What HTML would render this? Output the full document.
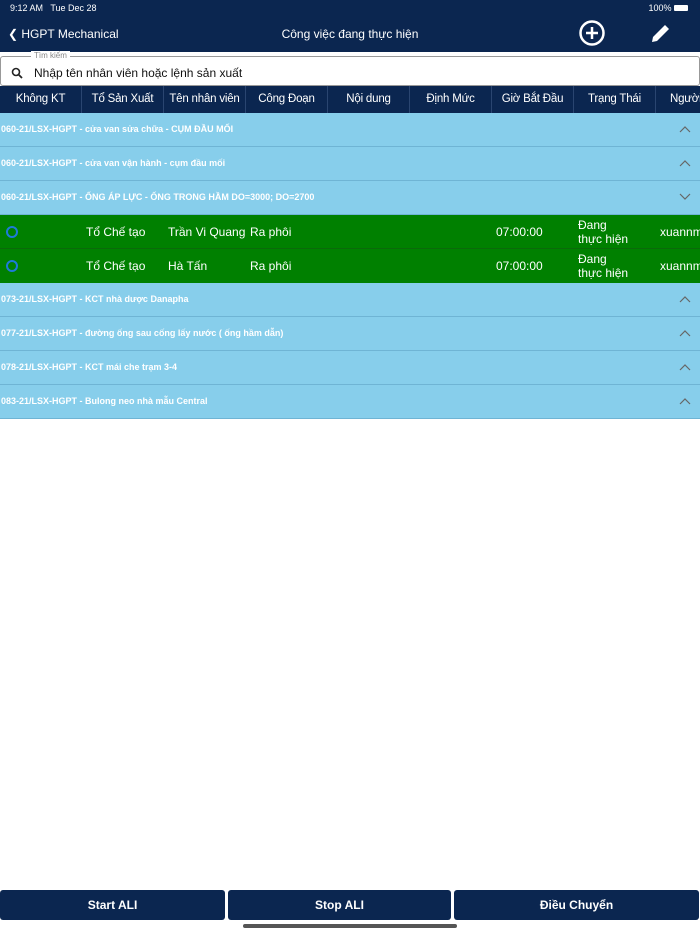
<!DOCTYPE html>
<html><head><meta charset="utf-8"><style>
*{margin:0;padding:0;box-sizing:border-box}
body{width:700px;height:934px;background:#fff;font-family:"Liberation Sans",sans-serif;position:relative;overflow:hidden}
.nav{position:absolute;left:0;top:0;width:700px;height:52px;background:#0b2650;color:#fff}
.sb{position:absolute;top:3px;font-size:9px;color:#fff}
.search{position:absolute;left:0;top:56px;width:700px;height:30px;border:1px solid #999;border-radius:3px;background:#fff}
.search .lbl{position:absolute;left:30px;top:-6px;font-size:8px;color:#888;background:#fff;padding:0 3px}
.search .t{position:absolute;left:33px;top:9px;font-size:12px;color:#111}
.hdr{position:absolute;left:0;top:86px;width:700px;height:27px;background:#0b2650;color:#fff;font-size:11.5px;font-weight:normal;letter-spacing:-0.2px}
.hdr div{position:absolute;top:0;width:82px;height:27px;line-height:27px;text-align:center;border-right:1px solid #2a4570;white-space:nowrap}
.g{position:absolute;left:0;width:700px;height:34px;background:#87ceeb;border-bottom:1px solid #6fb4d4;color:#fff;font-size:9px;font-weight:bold;line-height:33px;padding-left:1px}
.g svg{position:absolute;right:9px;top:12px}
.r{position:absolute;left:0;width:700px;height:34px;background:#008000;color:#fff;font-size:12px}
.r div{position:absolute;top:0;height:34px;line-height:34px}
.r .st{line-height:14px;top:3px}
.c{left:6px;top:11px!important;width:12px;height:12px!important;border:2px solid #1e7bd8;border-radius:50%}
.btn{position:absolute;top:890px;height:30px;background:#0b2650;color:#fff;font-size:12px;font-weight:bold;text-align:center;line-height:30px;border-radius:3px}
</style></head><body>
<div class="nav">
<div class="sb" style="left:10px">9:12 AM &nbsp; Tue Dec 28</div>
<div class="sb" style="right:12px">100% <span style="display:inline-block;width:14px;height:6px;background:#fff;border-radius:1px"></span></div>
<div style="position:absolute;left:8px;top:27px;font-size:12px">&#10094; HGPT Mechanical</div>
<div style="position:absolute;left:0;width:700px;text-align:center;top:27px;font-size:12px">Công việc đang thực hiện</div>
<svg style="position:absolute;left:578px;top:19px" width="28" height="28" viewBox="0 0 28 28"><circle cx="14" cy="14" r="11.5" fill="none" stroke="#fff" stroke-width="2.5"/><path d="M14 8v12M8 14h12" stroke="#fff" stroke-width="2.5"/></svg>
<svg style="position:absolute;left:650px;top:22px" width="22" height="22" viewBox="0 0 22 22"><path d="M2 20l1-5L15 3l4 4L7 19z" fill="#fff"/><path d="M16 2l4 4" stroke="#0b2650" stroke-width="1"/></svg>
</div>
<div class="search"><div class="lbl">Tìm kiếm</div>
<svg style="position:absolute;left:10px;top:10px" width="12" height="12" viewBox="0 0 12 12"><circle cx="5" cy="5" r="3.5" fill="none" stroke="#222" stroke-width="1.6"/><path d="M7.5 7.5L11 11" stroke="#222" stroke-width="1.8"/></svg>
<div class="t">Nhập tên nhân viên hoặc lệnh sản xuất</div></div>
<div class="hdr">
<div style="left:0">Không KT</div><div style="left:82px">Tổ Sản Xuất</div><div style="left:164px">Tên nhân viên</div><div style="left:246px">Công Đoạn</div><div style="left:328px">Nội dung</div><div style="left:410px">Định Mức</div><div style="left:492px">Giờ Bắt Đầu</div><div style="left:574px">Trạng Thái</div><div style="left:656px;text-align:left;padding-left:14px;width:60px">Người</div>
</div>
<div class="g" style="top:113px">060-21/LSX-HGPT - cửa van sửa chữa - CỤM ĐẦU MỐI<svg width="12" height="8" viewBox="0 0 12 8"><path d="M1 7l5-5 5 5" fill="none" stroke="#666" stroke-width="1.2"/></svg></div>
<div class="g" style="top:147px">060-21/LSX-HGPT - cửa van vận hành - cụm đầu mối<svg width="12" height="8" viewBox="0 0 12 8"><path d="M1 7l5-5 5 5" fill="none" stroke="#666" stroke-width="1.2"/></svg></div>
<div class="g" style="top:181px">060-21/LSX-HGPT - ỐNG ÁP LỰC - ỐNG TRONG HẦM DO=3000; DO=2700<svg width="12" height="8" viewBox="0 0 12 8"><path d="M1 1l5 5 5-5" fill="none" stroke="#666" stroke-width="1.2"/></svg></div>
<div class="r" style="top:215px;border-bottom:1px solid #0a6a0a"><div class="c"></div><div style="left:86px">Tổ Chế tạo</div><div style="left:168px">Trần Vi Quang</div><div style="left:250px">Ra phôi</div><div style="left:496px">07:00:00</div><div class="st" style="left:578px">Đang<br>thực hiện</div><div style="left:660px">xuannm</div></div>
<div class="r" style="top:249px"><div class="c"></div><div style="left:86px">Tổ Chế tạo</div><div style="left:168px">Hà Tấn</div><div style="left:250px">Ra phôi</div><div style="left:496px">07:00:00</div><div class="st" style="left:578px">Đang<br>thực hiện</div><div style="left:660px">xuannm</div></div>
<div class="g" style="top:283px">073-21/LSX-HGPT - KCT nhà dược Danapha<svg width="12" height="8" viewBox="0 0 12 8"><path d="M1 7l5-5 5 5" fill="none" stroke="#666" stroke-width="1.2"/></svg></div>
<div class="g" style="top:317px">077-21/LSX-HGPT - đường ống sau cống lấy nước ( ống hầm dẫn)<svg width="12" height="8" viewBox="0 0 12 8"><path d="M1 7l5-5 5 5" fill="none" stroke="#666" stroke-width="1.2"/></svg></div>
<div class="g" style="top:351px">078-21/LSX-HGPT - KCT mái che trạm 3-4<svg width="12" height="8" viewBox="0 0 12 8"><path d="M1 7l5-5 5 5" fill="none" stroke="#666" stroke-width="1.2"/></svg></div>
<div class="g" style="top:385px">083-21/LSX-HGPT - Bulong neo nhà mẫu Central<svg width="12" height="8" viewBox="0 0 12 8"><path d="M1 7l5-5 5 5" fill="none" stroke="#666" stroke-width="1.2"/></svg></div>
<div class="btn" style="left:0;width:225px">Start ALI</div>
<div class="btn" style="left:228px;width:223px">Stop ALI</div>
<div class="btn" style="left:454px;width:245px">Điều Chuyển</div>
<div style="position:absolute;left:243px;top:924px;width:214px;height:4px;border-radius:2px;background:#555"></div>
</body></html>
